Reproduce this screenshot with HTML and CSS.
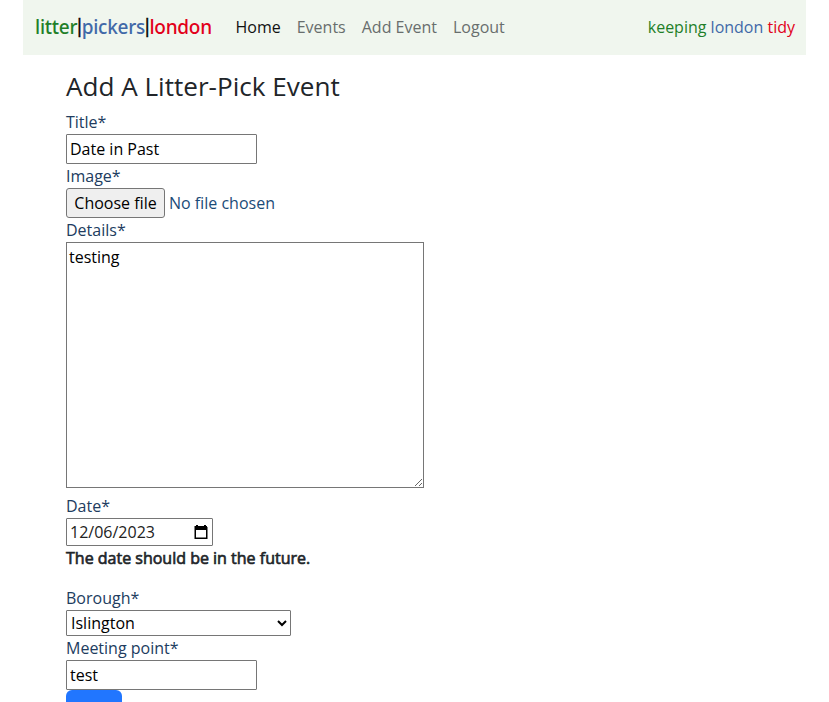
FILE: index.html
```html
<!DOCTYPE html>
<html lang="en">
<head>
<meta charset="utf-8">
<title>Add Event</title>
<link rel="stylesheet" href="styles.css">
</head>
<body>
<nav class="navbar">
  <a class="brand"><span class="green">litter</span><span class="bar">|</span><span class="blue">pickers</span><span class="bar">|</span><span class="red">london</span></a>
  <div class="links"><a class="active">Home</a><a>Events</a><a>Add Event</a><a>Logout</a></div>
  <div class="tagline"><span class="green">keeping</span> <span class="blue">london</span> <span class="red">tidy</span></div>
</nav>
<main class="content">
  <h1>Add A Litter-Pick Event</h1>
  <form>
    <div class="field"><label>Title*</label><input class="text" type="text" value="Date in Past"></div>
    <div class="field"><label>Image*</label><div class="file"><button type="button">Choose file</button><span>No file chosen</span></div></div>
    <div class="field details"><label>Details*</label><textarea>testing</textarea></div>
    <div class="field"><label>Date*</label>
      <div class="date"><span>12/06/2023</span>
        <svg width="14" height="14" viewBox="0 0 14 14"><path d="M1 1h1V0h2v1h6V0h2v1h1v1h.5v12H.5V1zM2 5v7.500h10V5z" fill="#000" fill-rule="evenodd"/></svg>
      </div>
      <strong class="error">The date should be in the future.</strong></div>
    <div class="field"><label>Borough*</label><select><option>Islington</option></select></div>
    <div class="field"><label>Meeting point*</label><input class="text" type="text" value="test"></div>
    <button class="submit" type="button"></button>
  </form>
</main>
</body>
</html>
```
FILE: styles.css
```css
*{box-sizing:border-box}
html{overflow:hidden}
body{margin:0 23px;height:702px;overflow:hidden;background:#fff;color:#212529;font:16px/24px "Open Sans",sans-serif}
.navbar{display:flex;align-items:center;height:55px;padding:0 11px 2px 12px;background:#f0f6ee}
.brand{display:flex;width:178px;font:500 19px/24px "Noto Sans",sans-serif;white-space:nowrap;letter-spacing:-.25px}
.green{color:#1f7f28}.blue{color:#4169a8}.red{color:#e2001a}
.bar{font:17px/24px "Liberation Sans",sans-serif;letter-spacing:0;color:#000;-webkit-text-stroke:.4px #000;transform:scaleY(1.15)}
.links{display:flex;gap:16px;margin-left:22.5px;color:#686e6d}
.links .active{color:#111}
.tagline{margin-left:auto}
.content{padding:16px 43px 0}
h1{margin:0 0 8px;font-size:26.1px;line-height:31px;font-weight:400}
.field{display:flex;flex-direction:column;align-items:flex-start;color:#213c60}
input,textarea,select,button{margin:0;font:inherit;color:#000;border-radius:0}
.text{width:191px;height:30px;padding:1px 3px;border:1px solid #767676;border-radius:1px}
.file{display:flex;align-items:center;gap:4px;height:30px;color:#1b4b78}
.file button{width:99px;height:30px;padding:0;border:1px solid #767676;border-radius:3px;background:#efefef}
.details{margin-bottom:6px}
textarea{width:358px;height:246px;padding:2px;border:1px solid #767676}
.date{display:flex;align-items:center;justify-content:space-between;width:147px;height:28px;padding:0 4px 0 3px;border:1px solid #767676;border-radius:1px;color:#222}
.error{margin:0 0 16px;color:#212529;font-weight:400;-webkit-text-stroke:.65px #212529}
select{width:225px;height:26px;padding:0;border:1px solid #767676;border-radius:1px;background:#fff}
.submit{display:block;width:56px;height:38px;border:0;border-radius:6px;background:#2176ff}
```
